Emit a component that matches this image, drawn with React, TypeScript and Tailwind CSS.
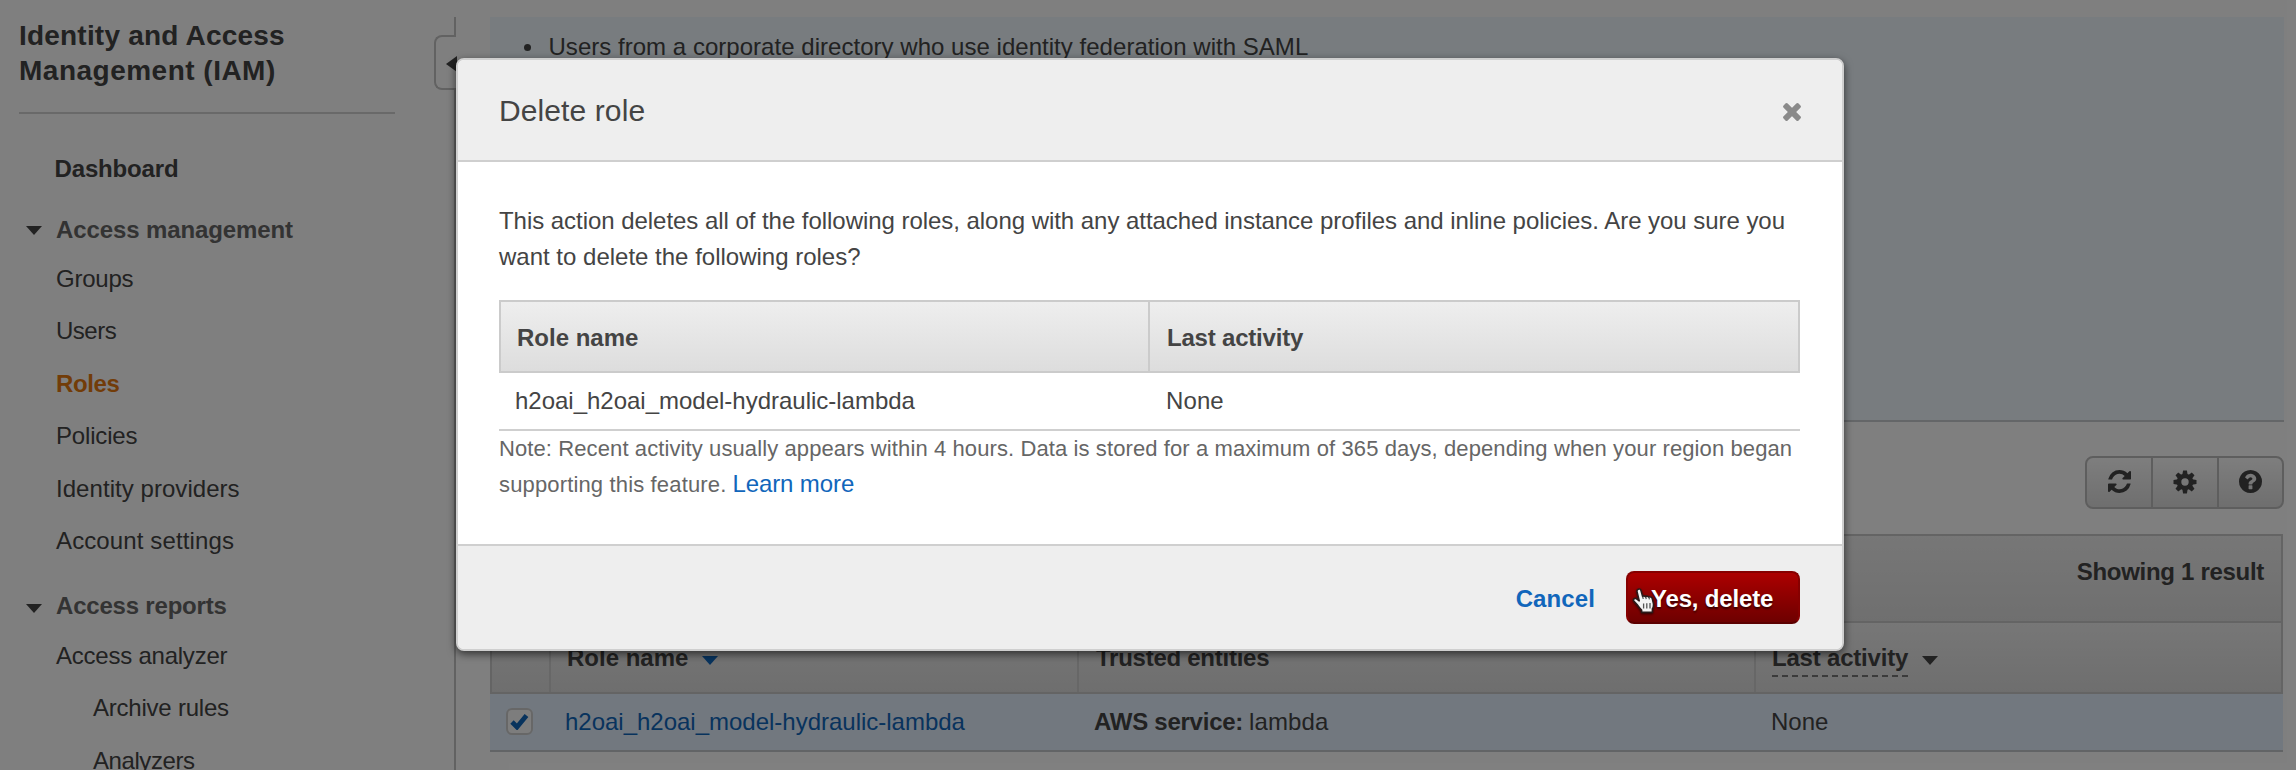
import React from "react";

function Caret({ className }: { className: string }) {
  return (
    <svg viewBox="0 0 16 9" className={`h-[9px] w-4 shrink-0 fill-current ${className}`}>
      <path d="M0 0H16L8 9Z" />
    </svg>
  );
}

function RefreshIcon() {
  return (
    <svg viewBox="0 0 1536 1536" className="size-[23px] fill-[#444]">
      <path d="M1511 928q0 5-1 7-64 268-268 434.5t-478 166.5q-146 0-282.5-55t-243.5-157l-129 129q-19 19-45 19t-45-19-19-45v-448q0-26 19-45t45-19h448q26 0 45 19t19 45-19 45l-137 137q71 66 161 102t187 36q134 0 250-65t186-179q11-17 53-117 8-23 30-23h192q13 0 22.5 9.5t9.5 22.5zm25-800v448q0 26-19 45t-45 19h-448q-26 0-45-19t-19-45 19-45l138-138q-148-137-349-137-134 0-250 65t-186 179q-11 17-53 117-8 23-30 23h-199q-13 0-22.5-9.5t-9.5-22.5v-7q65-268 270-434.5t480-166.5q146 0 284 55.5t245 156.5l130-129q19-19 45-19t45 19 19 45z" />
    </svg>
  );
}

function GearIcon() {
  const teeth = [0, 45, 90, 135, 180, 225, 270, 315];
  return (
    <svg viewBox="-12 -12 24 24" className="size-6 fill-[#444]">
      <circle r="6" fill="none" stroke="#444" strokeWidth="4.6" />
      {teeth.map((angle) => (
        <path key={angle} d="M-2.7 -7L-1.9 -11.5H1.9L2.7 -7Z" transform={`rotate(${angle})`} />
      ))}
    </svg>
  );
}

function HelpIcon() {
  return (
    <svg viewBox="0 0 1536 1536" className="size-[23px] fill-[#444]">
      <path d="M896 1248v-192q0-14-9-23t-23-9h-192q-14 0-23 9t-9 23v192q0 14 9 23t23 9h192q14 0 23-9t9-23zm256-672q0-88-55.5-163t-138.5-116-170-41q-243 0-371 213-15 24 8 42l132 100q7 6 19 6 16 0 25-12 53-68 86-92 34-24 86-24 48 0 85.5 26t37.5 59q0 38-20 61t-68 45q-63 28-115.5 86.5t-52.5 125.5v36q0 14 9 23t23 9h192q14 0 23-9t9-23q0-19 21.5-49.5t54.5-49.5q32-18 49-28.5t46-35 44.5-48 28-60.5 12.5-81zm384 192q0 209-103 385.5t-279.5 279.5-385.5 103-385.5-103-279.5-279.5-103-385.5 103-385.5 279.5-279.5 385.5-103 385.5 103 279.5 279.5 103 385.5z" />
    </svg>
  );
}

function CloseIcon() {
  return (
    <svg viewBox="-9 -9 18 18" className="size-[18px] fill-[#8a8a8a]">
      <rect x="-10.6" y="-2.9" width="21.2" height="5.8" rx="1.6" transform="rotate(45)" />
      <rect x="-10.6" y="-2.9" width="21.2" height="5.8" rx="1.6" transform="rotate(-45)" />
    </svg>
  );
}

function HandCursor() {
  return (
    <svg viewBox="0 0 24 27" className="absolute left-[4px] top-[14px] h-[27px] w-6 drop-shadow-[0_1px_1px_rgba(0,0,0,0.6)]">
      <path
        d="M6.2 2.2C7.4 1.6 8.6 2.2 9 3.6L10.6 9.4C11.2 8.6 12.8 8.6 13.6 9.8C14.4 8.8 16.2 9 16.8 10.2C17.8 9.4 19.6 9.8 20.2 11.4L21.4 16.4C21.8 18.6 21.2 20.6 20.4 22V25.4H9.6V23.2C7.6 21.4 6.4 19.2 4.8 17.2L1.8 14C0.8 12.4 2.4 10.8 4.2 11.6L7.2 13.8L5 4.6C4.8 3.6 5.2 2.6 6.2 2.2Z"
        fill="#f4f4f4"
        stroke="#2a1a1a"
        strokeWidth="1.6"
        strokeLinejoin="round"
      />
      <path d="M11.6 16.4V21.6M14.8 16.2V21.6M18 16V21.4" fill="none" stroke="#555" strokeWidth="1.3" />
      <path d="M10.7 9.6L11.2 12M13.8 10L14.2 12.2M17 10.6L17.4 12.4" fill="none" stroke="#444" strokeWidth="1.1" />
    </svg>
  );
}

const managementLinks = [
  { label: "Groups", style: "tracking-[-0.24px]" },
  { label: "Users", style: "tracking-[-0.5px]" },
  { label: "Roles", style: "font-bold tracking-[-0.4px] text-[#e47911]" },
  { label: "Policies", style: "tracking-[-0.17px]" },
  { label: "Identity providers", style: "tracking-[0.05px]" },
  { label: "Account settings", style: "tracking-[0.12px]" },
];

const reportLinks = [
  { label: "Access analyzer", style: "pl-14 tracking-[-0.23px]" },
  { label: "Archive rules", style: "pl-[93px] tracking-[-0.22px]" },
  { label: "Analyzers", style: "pl-[93px] tracking-[-0.42px]" },
];

function Sidebar() {
  return (
    <aside className="flex h-full w-[434px] shrink-0 flex-col pt-[18px]">
      <h1 className="ml-[19px] shrink-0 text-[28px] font-bold leading-[35px]">
        <span className="block tracking-[0.2px]">Identity and Access</span>
        <span className="block tracking-[0.49px]">Management (IAM)</span>
      </h1>
      <hr className="ml-[19px] mt-6 w-[376px] shrink-0 border-t-2 border-[#d2d2d2]" />
      <div className="mt-[28.5px] shrink-0 pl-[54.5px] font-bold leading-[52px] tracking-[-0.15px]">Dashboard</div>
      <div className="mt-3 flex h-[46px] shrink-0 items-center text-[#666]">
        <Caret className="ml-[26px] mt-0.5 text-[#444]" />
        <span className="ml-[14px] font-bold tracking-[-0.11px]">Access management</span>
      </div>
      <nav className="flex shrink-0 flex-col">
        {managementLinks.map((link) => (
          <a key={link.label} className={`h-[52.5px] shrink-0 pl-14 leading-[52.5px] ${link.style}`}>
            {link.label}
          </a>
        ))}
      </nav>
      <div className="mt-[15px] flex h-[46px] shrink-0 items-center text-[#666]">
        <Caret className="ml-[26px] mt-[5px] text-[#444]" />
        <span className="ml-[14px] font-bold tracking-[-0.2px]">Access reports</span>
      </div>
      <nav className="mt-px flex shrink-0 flex-col">
        {reportLinks.map((link) => (
          <a key={link.label} className={`h-[52.5px] shrink-0 leading-[52.5px] ${link.style}`}>
            {link.label}
          </a>
        ))}
      </nav>
    </aside>
  );
}

function CollapseRail() {
  return (
    <div className="flex h-full w-[56px] shrink-0 flex-col pt-[17px]">
      <div className="h-[18px] w-[22px] border-r-2 border-[#c4c4c4]" />
      <div className="flex h-[55px] w-[22px] shrink-0 items-center rounded-l-lg border-2 border-r-0 border-[#c4c4c4] pl-[10px]">
        <svg viewBox="0 0 11 16" className="mt-0.5 h-4 w-[11px] shrink-0 fill-[#444]">
          <path d="M11 0V16L0 8Z" />
        </svg>
      </div>
      <div className="w-[22px] grow border-r-2 border-[#c4c4c4]" />
    </div>
  );
}

function RolesTable() {
  return (
    <section className="mt-[25px] flex flex-col">
      <div className="flex h-[87px] w-[1793px] justify-end border-2 border-b-0 border-[#c8c8c8] bg-linear-to-b from-[#eeeeee] to-[#dfdfdf] pr-[17px] pt-[16px]">
        <span className="font-bold leading-[40px] tracking-[-0.3px]">Showing 1 result</span>
      </div>
      <div className="grid h-[73px] w-[1793px] grid-cols-[59px_528px_677px_1fr] border-2 border-[#c8c8c8] bg-linear-to-b from-[#eeeeee] to-[#dddddd] font-bold leading-[40px]">
        <div className="border-r-2 border-[#cfcfcf]" />
        <div className="flex items-start border-r-2 border-[#cfcfcf] pl-4 pt-[15px]">
          <span>Role name</span>
          <Caret className="ml-[14px] mt-[18px] text-[#1166bb]" />
        </div>
        <div className="border-r-2 border-[#cfcfcf] pl-[17px] pt-[15px] tracking-[-0.26px]">Trusted entities</div>
        <div className="flex items-start pl-4 pt-[15px]">
          <span className="h-[39px] border-b-2 border-dashed border-[#777] tracking-[-0.2px]">Last activity</span>
          <Caret className="ml-[14px] mt-[18px] text-[#444]" />
        </div>
      </div>
      <div className="grid h-[58px] w-[1793px] grid-cols-[59px_528px_677px_1fr] items-center border-b-2 border-[#c4c8cc] bg-[#e4f1ff] pb-px pl-0.5">
        <div className="pl-[14px]">
          <div className="flex size-[27px] items-center justify-center rounded-md border-2 border-[#cfcfcf] bg-[#fbfbfb]">
            <svg viewBox="0 0 19 17" className="h-[17px] w-[19px]">
              <path d="M2 9L7 14L16.5 2.5" fill="none" stroke="#1166bb" strokeWidth="4.8" />
            </svg>
          </div>
        </div>
        <a className="pl-[14px] tracking-[-0.01px] text-[#1166bb]">h2oai_h2oai_model-hydraulic-lambda</a>
        <div className="flex gap-[6px] pl-[15px]">
          <b className="tracking-[-0.25px]">AWS service:</b>
          <span className="tracking-[0.1px]">lambda</span>
        </div>
        <div className="pl-[15px]">None</div>
      </div>
    </section>
  );
}

function Main() {
  return (
    <main className="flex w-[1794px] shrink-0 flex-col pt-[17px]">
      <div className="h-[405px] border-b-2 border-[#c8ccd0] bg-[#f0f8fe] pt-[10px]">
        <div className="flex items-center pl-[34px] leading-[40px]">
          <span className="mr-[17.5px] size-[7px] rounded-full bg-[#444]" />
          <span className="tracking-[0.03px]">Users from a corporate directory who use identity federation with SAML</span>
        </div>
      </div>
      <div className="mt-[34px] flex h-[53px] w-[199px] self-end overflow-hidden rounded-lg border-2 border-[#bdbdbd] bg-linear-to-b from-[#fcfcfc] to-[#dedede]">
        <div className="flex w-[66px] items-center justify-center border-r-2 border-[#bdbdbd] pb-0.5">
          <RefreshIcon />
        </div>
        <div className="flex w-[66px] items-center justify-center border-r-2 border-[#bdbdbd] pb-0.5">
          <GearIcon />
        </div>
        <div className="flex grow items-center justify-center pb-0.5">
          <HelpIcon />
        </div>
      </div>
      <RolesTable />
    </main>
  );
}

function DeleteDialog() {
  return (
    <div
      role="dialog"
      className="ml-[456px] mt-[58px] flex h-[593px] w-[1388px] flex-col overflow-hidden rounded-lg border-2 border-[#cfcfcf] bg-white shadow-[0_3px_8px_rgba(0,0,0,0.6)]"
    >
      <header className="flex h-[102px] items-center justify-between border-b-2 border-[#cfcfcf] bg-[#eeeeee] pl-[41px] pr-[41px]">
        <h2 className="pt-0.5 text-[30px] leading-[40px] tracking-[0.1px]">Delete role</h2>
        <button className="mt-[3px]">
          <CloseIcon />
        </button>
      </header>
      <div className="flex grow flex-col pl-[41px] pr-[42px] pt-[41px]">
        <p className="whitespace-nowrap leading-[35.5px]">
          <span className="block tracking-[-0.043px]">
            This action deletes all of the following roles, along with any attached instance profiles and inline policies. Are you sure you
          </span>
          <span className="block">want to delete the following roles?</span>
        </p>
        <div className="mt-[26px] grid h-[73px] grid-cols-[649px_1fr] border-2 border-[#cbcbcb] bg-linear-to-b from-[#eeeeee] to-[#dddddd] font-bold leading-[67px]">
          <div className="border-r-2 border-[#cbcbcb] pl-4 pt-0.5">Role name</div>
          <div className="pl-[17px] pt-0.5 tracking-[-0.2px]">Last activity</div>
        </div>
        <div className="grid h-[58px] grid-cols-[652px_1fr] border-b-2 border-[#cfcfcf] leading-[55px]">
          <div className="pl-4 tracking-[-0.01px]">h2oai_h2oai_model-hydraulic-lambda</div>
          <div className="pl-[15px] tracking-[0.1px]">None</div>
        </div>
        <p className="whitespace-nowrap text-[22px] leading-[35px] text-[#666]">
          <span className="block tracking-[0.1px]">
            Note: Recent activity usually appears within 4 hours. Data is stored for a maximum of 365 days, depending when your region began
          </span>
          <span className="flex items-baseline">
            <span className="tracking-[0.15px]">supporting this feature.</span>
            <a className="ml-[6px] text-2xl leading-[35px] tracking-[-0.1px] text-[#1166bb]">Learn more</a>
          </span>
        </p>
      </div>
      <footer className="flex h-[105px] items-center justify-end border-t-2 border-[#cfcfcf] bg-[#eeeeee] pr-[42px]">
        <button className="pt-0.5 font-bold tracking-[0.1px] text-[#1166bb]">Cancel</button>
        <button className="relative ml-[31px] h-[53px] w-[174px] rounded-lg border-2 border-[#860000] border-b-[#5c0000] bg-linear-to-b from-[#ac0000] to-[#6e0000] pl-[23px] pt-0.5 text-left font-bold tracking-[-0.17px] text-white [text-shadow:0_2px_2px_rgba(0,0,0,0.6)]">
          Yes, delete
          <HandCursor />
        </button>
      </footer>
    </div>
  );
}

export default function App() {
  return (
    <div className="relative flex h-[770px] w-[2296px] overflow-hidden bg-white font-['Liberation_Sans',Arial,sans-serif] text-2xl text-[#444]">
      <Sidebar />
      <CollapseRail />
      <Main />
      <div className="absolute inset-0 bg-black/50">
        <DeleteDialog />
      </div>
    </div>
  );
}
